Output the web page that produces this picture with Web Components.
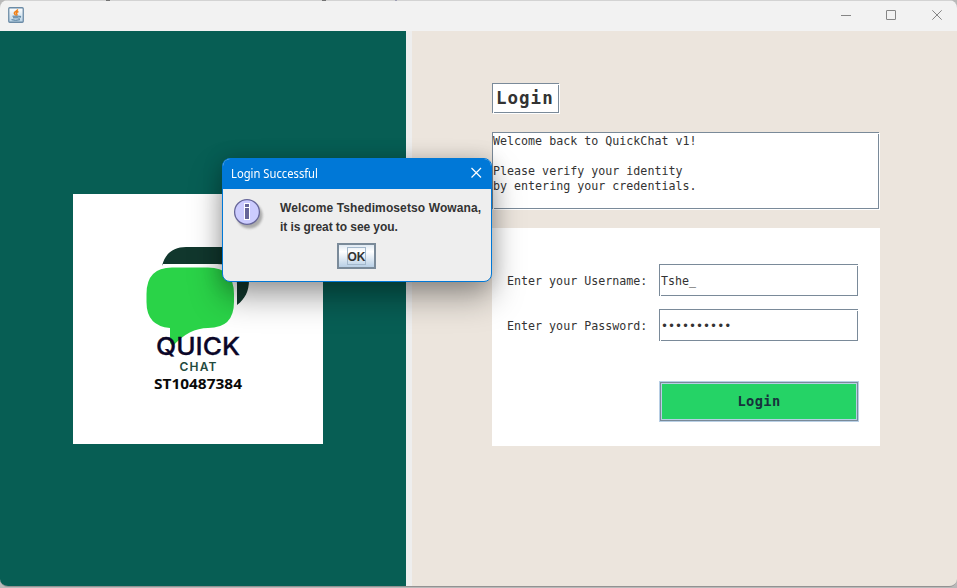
<!DOCTYPE html>
<html lang="en"><head><meta charset="utf-8"><title>QuickChat</title>
<style>html,body{margin:0;width:957px;height:588px;overflow:hidden;background:#b9b9b9}</style></head>
<body><chat-app></chat-app>
<script>
const MONO = '"DejaVu Sans Mono","Liberation Mono",monospace';
const define = (name, html) => customElements.define(name, class extends HTMLElement {
  constructor() { super(); this.attachShadow({mode:'open'}).innerHTML = html; }
});

define('java-icon', `<style>:host{display:block;width:16px;height:16px}svg{display:block}</style>
<svg width="16" height="16" viewBox="0 0 16 16"><defs><linearGradient id="g" x2="0" y2="1"><stop stop-color="#fff"/><stop offset="1" stop-color="#b9d3e6"/></linearGradient></defs>
<rect x=".75" y=".75" width="14.5" height="14.5" rx="1" fill="url(#g)" stroke="#6b8ba6" stroke-width="1.3"/>
<path d="M9.5 2.2C10 4 6 4.600 6.300 6.200 6.500 7.200 7.600 7.500 7.300 8.500M10.500 4.500C8 5.500 8 6.200 8.800 7 9.300 7.600 8.800 8.200 8.300 8.500" fill="none" stroke="#f08018" stroke-width="1.500"/>
<path d="M4.500 9.200h6.500M5 10.800h5.500M3.500 12.700q4 1.200 8.500 0M11 9.300q2.500-.5 1.500 1-.7.900-2 1" fill="none" stroke="#4d7899" stroke-width="1"/></svg>`);

define('window-buttons', `<style>:host{display:block}svg{display:block}</style>
<svg width="117" height="31" viewBox="0 0 117 31" fill="none" stroke="#858585"><path d="M1 15.500h10M92.300 10.300l9.400 9.400M101.700 10.300l-9.400 9.400"/><rect x="46.500" y="10.500" width="9" height="9" rx=".3"/></svg>`);

define('title-bar', `<style>:host{display:flex;box-sizing:border-box;height:31px;flex:none;background:linear-gradient(90deg,transparent 106px,#333 106px 110px,transparent 110px 322px,#333 322px 326px,transparent 326px 395px,#8a8ab5 395px 397px,transparent 397px) 0 0/100% 1px no-repeat border-box,#f2f2f2;border-top:1px solid #b3b3b380;justify-content:space-between}
java-icon{margin:6px 0 0 8px}window-buttons{margin-top:-1px}</style><java-icon></java-icon><window-buttons></window-buttons>`);

define('quick-logo', `<style>:host{display:block;width:250px;height:250px;background:#fff}svg{display:block}</style>
<svg width="250" height="250" viewBox="73 194 250 250">
<path d="M162 266C165 253 174 247 186 247H222C241 247 249 257 249 273V280C249 291 245 299 237 305V284C237 270 230 264 217 264H162Z" fill="#11372d"/>
<path d="M172 267.500H208Q234 267.500 234 294V302Q234 328 208 328Q189 328 173 346L170 343V328Q146.500 326 146.500 302V294Q146.500 267.500 172 267.500Z" fill="#2ad348"/>
<g text-anchor="middle"><text x="198" y="355" font-family="Inter,sans-serif" font-weight="500" font-size="24.500" textLength="84" lengthAdjust="spacingAndGlyphs" fill="#0b0628" stroke="#0b0628" stroke-width=".3">QUICK</text>
<text x="198" y="370.500" font-family="Inter,sans-serif" font-weight="600" font-size="12" textLength="37" fill="#234a3d">CHAT</text>
<text x="198" y="388.500" font-family="'Noto Sans',sans-serif" font-weight="700" font-size="14.500" textLength="88" lengthAdjust="spacingAndGlyphs" fill="#090909">ST10487384</text></g></svg>`);

/* Recessed frame: slate outline with white highlight outside and notched corners. */
define('metal-field', `<style>:host{display:block;position:relative;box-sizing:border-box;background:#fff;border:1px solid #7a8a99;box-shadow:1px 1px #fff;color:#333;white-space:pre;font:11.670px ${MONO}}
:host::before,:host::after{content:"";position:absolute;width:1px;height:1px;background:#fff}
:host::before{right:-1px;top:0}:host::after{left:0;bottom:-1px}</style><slot></slot>`);

define('login-form', `<style>:host{display:grid;box-sizing:border-box;width:388px;height:218px;background:#fff;padding:36px 21px 25px 15px;grid-template-columns:152px 200px;grid-template-rows:32px 32px 40px;row-gap:13px;align-content:start;color:#333;font:11.670px ${MONO}}
label{line-height:32px;white-space:pre;padding-top:1px}
metal-field{width:199px;line-height:32px;padding-left:1px}
button{grid-column:2;margin:27px 0 0;box-sizing:border-box;width:200px;height:41px;padding:0 0 2px;border:1px solid #b8cfe5;box-shadow:inset 0 0 0 1px #7a8a99,inset 0 0 0 2px #b8cfe5;background:#25d366;color:#17323c;font:bold 13.700px ${MONO};letter-spacing:.4px}</style>
<label>Enter your Username:</label><metal-field>Tshe_</metal-field>
<label>Enter your Password:</label><metal-field>••••••••••</metal-field><button>Login</button>`);

define('success-dialog', `<style>:host{display:flex;flex-direction:column;box-sizing:border-box;position:absolute;left:222px;top:158px;width:270px;height:124px;border:1px solid #0078d7;border-radius:8px;overflow:hidden;background:#eee;box-shadow:0 16px 32px rgba(0,0,0,.34),0 1px 20px rgba(0,0,0,.18)}
header{display:flex;justify-content:space-between;height:30px;flex:none;background:#0078d7;color:#fff;font:12px/30px "Noto Sans",sans-serif;padding:0 9px 0 8px}header span{display:block;transform:scaleX(.935);transform-origin:0 0;white-space:nowrap}header svg{margin-top:8px}
.msg{display:flex;height:45px;padding:8px 0 0 8px}p{margin:2px 0 0 14px;font:bold 12px/19px "Liberation Sans",Arial,sans-serif;color:#333;white-space:nowrap}
.a{letter-spacing:.11px}.b{letter-spacing:-.07px}
button{box-sizing:border-box;width:39px;height:26px;margin:1px 0 0 114px;padding:0;border:2px solid #7a8a99;background:linear-gradient(#dfe9f2,#fff 30%,#b8cfe5);display:flex;align-items:center;justify-content:center;color:#333;font:bold 12px "Liberation Sans",Arial,sans-serif}
button span{display:block;box-sizing:border-box;width:19px;height:18px;line-height:18px;border:1px solid #a3b8cc;text-align:center;text-indent:-.5px}</style>
<header><span>Login Successful</span><svg width="12" height="12" fill="none" stroke="#fff" stroke-width="1.200"><path d="M1.500 1l9.500 9.500M11 1L1.500 10.500"/></svg></header>
<div class="msg"><svg width="35" height="35" viewBox="0 0 35 35"><defs><filter id="b"><feGaussianBlur stdDeviation="1.300"/></filter></defs><circle cx="18.500" cy="18.500" r="13" fill="#888" opacity=".65" filter="url(#b)"/><circle cx="16" cy="15" r="12.400" fill="#ccf" stroke="#669" stroke-width="1.300"/><path d="M13 6h6v5h-6zM13 10h6v13h-6z" fill="#fff"/><path d="M14 7h4v3h-4zM14 11h4v11h-4z" fill="#669"/></svg><p><span class="a">Welcome Tshedimosetso Wowana,</span><br><span class="b">it is great to see you.</span></p></div>
<button><span>OK</span></button>`);

define('chat-app', `<style>:host{display:flex;position:relative;flex-direction:column;box-sizing:border-box;width:957px;height:587px;border-radius:8px;overflow:hidden;border-bottom:1px solid #929292}
main{display:flex;flex:1;min-height:0}.brand{width:406px;background:#075e54;display:flex;box-sizing:border-box;padding:163px 0 0 73px}.divider{width:6px;background:#eee}
.login{flex:1;display:flex;flex-direction:column;align-items:flex-start;background:#ece5dd;padding:52px 0 0 80px}
.title{width:67px;height:30px;box-sizing:border-box;padding-left:3px;line-height:29px;font-weight:bold;font-size:17.500px;letter-spacing:1px}
.intro{width:387px;height:77px;margin:19px 0;line-height:15px;padding-top:1px}</style>
<title-bar></title-bar><main><section class="brand"><quick-logo></quick-logo></section><div class="divider"></div><section class="login"><metal-field class="title">Login</metal-field><metal-field class="intro">Welcome back to QuickChat v1!

Please verify your identity
by entering your credentials.</metal-field><login-form></login-form></section></main><success-dialog></success-dialog>`);
</script></body></html>
